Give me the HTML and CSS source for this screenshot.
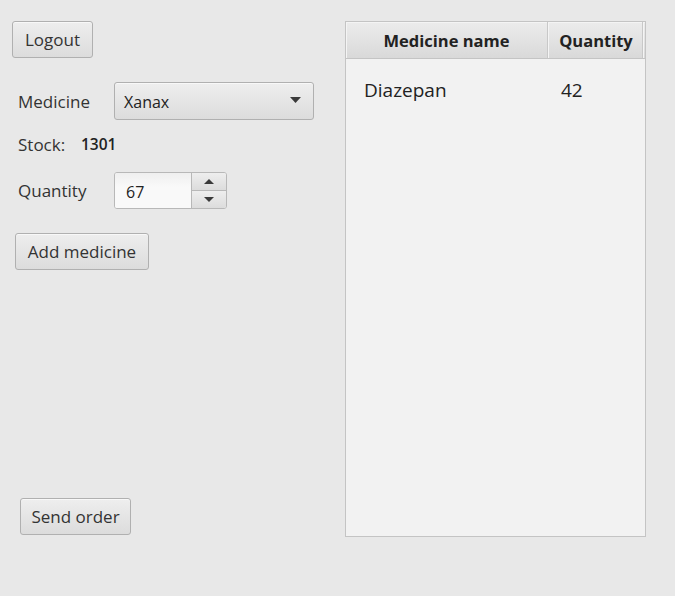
FILE: index.html
```html
<!DOCTYPE html>
<html lang="en">
<head>
<meta charset="utf-8">
<title>Order</title>
<link rel="stylesheet" href="styles.css">
</head>
<body>
<div class="window">
  <div class="left">
    <button class="btn logout">Logout</button>
    <div class="row medicine-row">
      <span class="label">Medicine</span>
      <div class="combo">
        <span class="combo-text">Xanax</span>
        <svg class="combo-arrow" width="11" height="6" viewBox="0 0 11 6"><path d="M0 0 L11 0 L5.5 6 Z" fill="#3a3a3a"/></svg>
      </div>
    </div>
    <div class="row stock-row">
      <span class="label">Stock:</span>
      <span class="stock-val">1301</span>
    </div>
    <div class="row qty-row">
      <span class="label">Quantity</span>
      <div class="spinner">
        <div class="spin-field">67</div>
        <div class="spin-buttons">
          <div class="spin-btn up"><svg width="10" height="5" viewBox="0 0 10 5"><path d="M0 5 L10 5 L5 0 Z" fill="#3a3a3a"/></svg></div>
          <div class="spin-btn down"><svg width="10" height="5" viewBox="0 0 10 5"><path d="M0 0 L10 0 L5 5 Z" fill="#3a3a3a"/></svg></div>
        </div>
      </div>
    </div>
    <button class="btn add">Add medicine</button>
    <button class="btn send">Send order</button>
  </div>
  <div class="table">
    <div class="thead">
      <div class="th col-name">Medicine name</div>
      <div class="th col-qty">Quantity</div>
      <div class="th filler"></div>
    </div>
    <div class="tbody">
      <div class="tr">
        <div class="td col-name">Diazepan</div>
        <div class="td col-qty">42</div>
      </div>
    </div>
  </div>
</div>
</body>
</html>
```
FILE: styles.css
```css
html, body {
  margin: 0;
  padding: 0;
  background: #e8e8e8;
}
body {
  font-family: "Open Sans", "Noto Sans", sans-serif;
  color: #333;
}
.window {
  display: flex;
  padding-top: 21px;
  height: 596px;
  box-sizing: border-box;
}
.left {
  width: 345px;
  height: 515px;
  display: flex;
  flex-direction: column;
  align-items: flex-start;
}
.btn {
  font-family: inherit;
  font-size: 17px;
  color: #333;
  background: linear-gradient(#eeeeee, #dcdcdc);
  border: 1px solid #b0b0b0;
  border-radius: 3px;
  box-shadow: inset 0 1px 0 #f8f8f8;
  padding: 0;
  box-sizing: border-box;
  display: flex;
  align-items: center;
  justify-content: center;
}
.logout {
  margin-left: 12px;
  width: 81px;
  height: 37px;
}
.row {
  display: flex;
  align-items: center;
  margin-left: 18px;
}
.label {
  font-size: 17px;
}
.medicine-row {
  margin-top: 24px;
  height: 38px;
}
.medicine-row .label {
  width: 96px;
}
.combo {
  width: 200px;
  height: 38px;
  box-sizing: border-box;
  border: 1px solid #b0b0b0;
  border-radius: 3px;
  background: linear-gradient(#eeeeee, #dcdcdc);
  box-shadow: inset 0 1px 0 #f8f8f8;
  display: flex;
  align-items: center;
  padding: 2px 12px 0 9px;
}
.combo-text {
  flex: 1;
  font-size: 16px;
  color: #222;
}
.combo-arrow {
  margin-top: -4px;
}
.stock-row {
  margin-top: 14px;
  height: 20px;
}
.stock-row .label {
  width: 63px;
}
.stock-val {
  font-size: 15.5px;
  font-weight: 600;
  color: #222;
}
.qty-row {
  margin-top: 18px;
  height: 36px;
}
.qty-row .label {
  width: 96px;
}
.spinner {
  display: flex;
  width: 113px;
  height: 37px;
  box-sizing: border-box;
  border: 1px solid #b8b8b8;
  border-radius: 3px;
  background: #f6f6f6;
  overflow: hidden;
}
.spin-field {
  width: 77px;
  box-sizing: border-box;
  padding: 3px 0 0 11px;
  display: flex;
  align-items: center;
  font-size: 16px;
  color: #222;
  background: linear-gradient(#efefef, #f9f9f9 40%);
  border-right: 1px solid #b8b8b8;
}
.spin-buttons {
  flex: 1;
  display: flex;
  flex-direction: column;
}
.spin-btn {
  flex: 1;
  display: flex;
  align-items: center;
  justify-content: center;
  background: linear-gradient(#eeeeee, #dcdcdc);
}
.spin-btn.up {
  border-bottom: 1px solid #b8b8b8;
}
.add {
  margin-top: 25px;
  margin-left: 15px;
  width: 134px;
  height: 37px;
}
.send {
  margin-top: auto;
  margin-left: 20px;
  width: 111px;
  height: 37px;
  margin-bottom: 1px;
}
.table {
  width: 301px;
  height: 516px;
  box-sizing: border-box;
  border: 1px solid #c4c4c4;
  background: #f2f2f2;
  display: flex;
  flex-direction: column;
}
.thead {
  display: flex;
  height: 37px;
  box-sizing: border-box;
  border-bottom: 1px solid #c4c4c4;
  background: linear-gradient(#ececec, #d9d9d9);
}
.th {
  box-sizing: border-box;
  display: flex;
  align-items: center;
  justify-content: center;
  font-size: 16.5px;
  font-weight: 700;
  color: #222;
  border-right: 1px solid #c8c8c8;
  box-shadow: inset 1px 1px 0 #f4f4f4;
}
.th.col-name { width: 202px; }
.th.col-qty { width: 95px; padding-left: 2px; }
.th.filler { flex: 1; border-right: none; }
.tr {
  display: flex;
  height: 62px;
  align-items: center;
}
.td {
  font-size: 19px;
  color: #222;
}
.td.col-name {
  width: 215px;
  padding-left: 18px;
  box-sizing: border-box;
}
```
